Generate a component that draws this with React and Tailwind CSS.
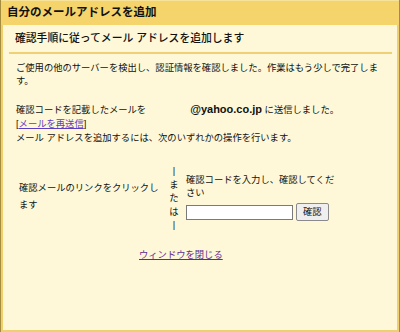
export default function App() {
  return (
    <div className="w-[400px] h-[332px] border-x border-[#a48d3e] bg-[#fef8d8] flex flex-col overflow-hidden font-['Liberation_Sans','Noto_Sans_CJK_JP',sans-serif] text-[#111]">
      <div className="h-[25px] shrink-0 bg-[#f5d46c] border-t border-[#f8e39a] flex items-center pl-[6px] text-[11.5px] font-bold">
        自分のメールアドレスを追加
      </div>
      <div className="flex-1 flex flex-col border-x-2 border-b-2 border-[#efd06e] text-[9.3px] leading-[14px]">
        <div className="pt-[6px] pl-[12px] text-[10.8px] leading-[14px] font-medium">
          確認手順に従ってメール アドレスを追加します
        </div>
        <div className="mt-[7px] ml-[6px] mr-[5px] h-[2px] bg-[#f0d074]"></div>
        <div className="pl-[13px] pr-[16px] mt-[8px] leading-[13px]">
          ご使用の他のサーバーを検出し、認証情報を確認しました。作業はもう少しで完了します。
        </div>
        <div className="pl-[13px] mt-[14px]">
          <div>
            確認コードを記載したメールを<span className="inline-block w-[44px]"></span>
            <span className="font-bold text-[11px]">@yahoo.co.jp</span> に送信しました。
          </div>
          <div>
            [<span className="text-[#5b3fc4] underline">メールを再送信</span>]
          </div>
          <div>メール アドレスを追加するには、次のいずれかの操作を行います。</div>
        </div>
        <div className="flex items-center pl-[16px] mt-[20px]">
          <div className="w-[150px] shrink-0 pr-[8px] leading-[17px] mt-[-4px]">確認メールのリンクをクリックします</div>
          <div className="w-[10px] shrink-0 flex flex-col items-center leading-[13.5px]">
            <span>|</span>
            <span>ま</span>
            <span>た</span>
            <span>は</span>
            <span>|</span>
          </div>
          <div className="w-[152px] shrink-0 ml-[7px] leading-[13px] mt-[-2px]">
            <div>確認コードを入力し、確認してください</div>
            <div className="flex items-center gap-[3px] mt-[3px]">
              <input type="text" className="w-[107px] h-[15px] bg-white border border-[#7a7a7a] outline-none" />
              <button className="h-[18px] px-[6px] bg-[#efefef] border border-[#8a8a8a] rounded-[2px] text-[9.3px] leading-[14px]">確認</button>
            </div>
          </div>
        </div>
        <div className="mt-[15px] pl-[136px]">
          <span className="text-[#5a2d91] underline">ウィンドウを閉じる</span>
        </div>
      </div>
    </div>
  );
}
